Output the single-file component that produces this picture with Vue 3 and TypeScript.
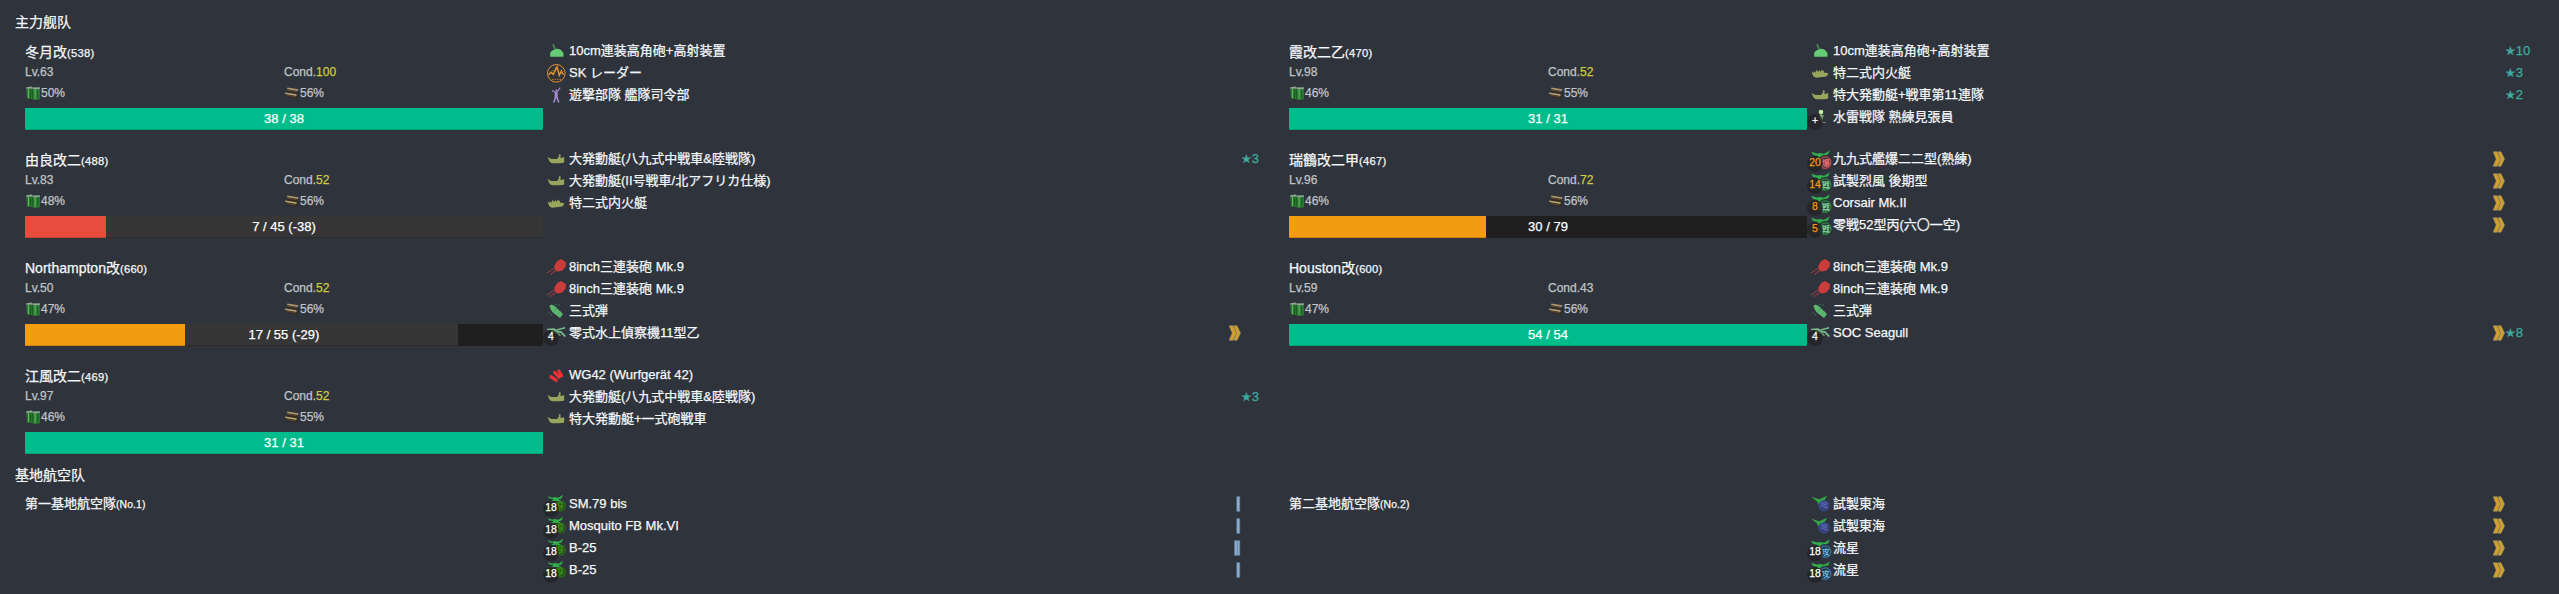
<script setup lang="ts">
type IconName =
  | 'aaGun' | 'radar' | 'command' | 'landing' | 'amphibious' | 'gun' | 'shell'
  | 'seaplane' | 'rocket' | 'lookout' | 'bomber' | 'fighter' | 'landPlane' | 'patrol' | 'attacker'

type Proficiency = 'ace' | 'one' | 'two'

interface Equip {
  icon: IconName
  name: string
  star?: number
  prof?: Proficiency
  slot?: string
  reduced?: boolean
}

interface Ship {
  name: string
  id: number
  lv: number
  cond: number
  fuel: number
  ammo: number
  hp: number
  max: number
  lost?: number
  equips: Equip[]
}

const ships: Ship[] = [
  {
    name: '冬月改', id: 538, lv: 63, cond: 100, fuel: 50, ammo: 56, hp: 38, max: 38,
    equips: [
      { icon: 'aaGun', name: '10cm連装高角砲+高射装置' },
      { icon: 'radar', name: 'SK レーダー' },
      { icon: 'command', name: '遊撃部隊 艦隊司令部' },
    ],
  },
  {
    name: '霞改二乙', id: 470, lv: 98, cond: 52, fuel: 46, ammo: 55, hp: 31, max: 31,
    equips: [
      { icon: 'aaGun', name: '10cm連装高角砲+高射装置', star: 10 },
      { icon: 'amphibious', name: '特二式内火艇', star: 3 },
      { icon: 'landing', name: '特大発動艇+戦車第11連隊', star: 2 },
      { icon: 'lookout', name: '水雷戦隊 熟練見張員', slot: '+' },
    ],
  },
  {
    name: '由良改二', id: 488, lv: 83, cond: 52, fuel: 48, ammo: 56, hp: 7, max: 45, lost: 38,
    equips: [
      { icon: 'landing', name: '大発動艇(八九式中戦車&陸戦隊)', star: 3 },
      { icon: 'landing', name: '大発動艇(II号戦車/北アフリカ仕様)' },
      { icon: 'amphibious', name: '特二式内火艇' },
    ],
  },
  {
    name: '瑞鶴改二甲', id: 467, lv: 96, cond: 72, fuel: 46, ammo: 56, hp: 30, max: 79,
    equips: [
      { icon: 'bomber', name: '九九式艦爆二二型(熟練)', slot: '20', reduced: true, prof: 'ace' },
      { icon: 'fighter', name: '試製烈風 後期型', slot: '14', reduced: true, prof: 'ace' },
      { icon: 'fighter', name: 'Corsair Mk.II', slot: '8', reduced: true, prof: 'ace' },
      { icon: 'fighter', name: '零戦52型丙(六〇一空)', slot: '5', reduced: true, prof: 'ace' },
    ],
  },
  {
    name: 'Northampton改', id: 660, lv: 50, cond: 52, fuel: 47, ammo: 56, hp: 17, max: 55, lost: 29,
    equips: [
      { icon: 'gun', name: '8inch三連装砲 Mk.9' },
      { icon: 'gun', name: '8inch三連装砲 Mk.9' },
      { icon: 'shell', name: '三式弾' },
      { icon: 'seaplane', name: '零式水上偵察機11型乙', slot: '4', prof: 'ace' },
    ],
  },
  {
    name: 'Houston改', id: 600, lv: 59, cond: 43, fuel: 47, ammo: 56, hp: 54, max: 54,
    equips: [
      { icon: 'gun', name: '8inch三連装砲 Mk.9' },
      { icon: 'gun', name: '8inch三連装砲 Mk.9' },
      { icon: 'shell', name: '三式弾' },
      { icon: 'seaplane', name: 'SOC Seagull', slot: '4', prof: 'ace', star: 8 },
    ],
  },
  {
    name: '江風改二', id: 469, lv: 97, cond: 52, fuel: 46, ammo: 55, hp: 31, max: 31,
    equips: [
      { icon: 'rocket', name: 'WG42 (Wurfgerät 42)' },
      { icon: 'landing', name: '大発動艇(八九式中戦車&陸戦隊)', star: 3 },
      { icon: 'landing', name: '特大発動艇+一式砲戦車' },
    ],
  },
]

const bases: { name: string; no: number; equips: Equip[] }[] = [
  {
    name: '第一基地航空隊', no: 1,
    equips: [
      { icon: 'landPlane', name: 'SM.79 bis', slot: '18', prof: 'one' },
      { icon: 'landPlane', name: 'Mosquito FB Mk.VI', slot: '18', prof: 'one' },
      { icon: 'landPlane', name: 'B-25', slot: '18', prof: 'two' },
      { icon: 'landPlane', name: 'B-25', slot: '18', prof: 'one' },
    ],
  },
  {
    name: '第二基地航空隊', no: 2,
    equips: [
      { icon: 'patrol', name: '試製東海', prof: 'ace' },
      { icon: 'patrol', name: '試製東海', prof: 'ace' },
      { icon: 'attacker', name: '流星', slot: '18', prof: 'ace' },
      { icon: 'attacker', name: '流星', slot: '18', prof: 'ace' },
    ],
  },
]

const planeMarks: Partial<Record<IconName, { color: string; text: string; fill: string }>> = {
  bomber: { color: '#c8494d', text: '爆', fill: '#f0696b' },
  fighter: { color: '#258a3e', text: '戦', fill: '#7bd397' },
  attacker: { color: '#3474a8', text: '攻', fill: '#5fb4ea' },
}

const units = [
  ...ships.map((s) => ({ key: s.name, group: 0, title: s.name, note: `(${s.id})`, ship: s as Ship | null, equips: s.equips })),
  ...bases.map((b) => ({ key: b.name, group: 1, title: b.name, note: `(No.${b.no})`, ship: null as Ship | null, equips: b.equips })),
]

const groups = [
  { title: '主力舰队', kind: 'fleet', units: units.filter((u) => u.group === 0) },
  { title: '基地航空队', kind: 'bases', units: units.filter((u) => u.group === 1) },
]

const level = (s: Ship) => (s.hp / s.max <= 0.25 ? 'danger' : s.hp / s.max <= 0.5 ? 'warning' : 'success')
const percent = (n: number, max: number) => `${(n / max) * 100}%`
const hpText = (s: Ship) => `${s.hp} / ${s.max}${s.lost ? ` (-${s.lost})` : ''}`
</script>

<template>
  <main class="report">
    <section v-for="g in groups" :key="g.title" :class="g.kind">
      <h2 class="title">{{ g.title }}</h2>
      <div class="grid">
        <article v-for="u in g.units" :key="u.key" class="unit">
          <div class="info">
            <div class="name">{{ u.title }}<small>{{ u.note }}</small></div>
            <template v-if="u.ship">
              <div class="stats lv">
                <span>Lv.{{ u.ship.lv }}</span>
                <span>Cond.<b :class="{ high: u.ship.cond > 49 }">{{ u.ship.cond }}</b></span>
              </div>
              <div class="stats supply">
                <span>
                  <svg class="res" viewBox="0 0 16 16">
                    <path d="M1.2 2.4H7.8V14L2 13.8z" fill="#2c7a2e" />
                    <path d="M7.6 3 14.8 2.4V14.2L9 15 7.6 14z" fill="#2a8430" />
                    <path d="M1.2 2.2 6.5 1.5 7.8 2.6 7.6 3.6 1.4 3.8zM7.8 2.6 14.8 2.2v1.8l-6.6.5z" fill="#93a396" />
                    <path d="M3.5 4v9M10.2 4.8v9" stroke="#6aa96b" stroke-width="1" />
                    <path d="M5.6 4v9.2M7.8 4v9.6M12.8 4.2v9.6" stroke="#15481c" stroke-width=".7" />
                  </svg>{{ u.ship.fuel }}%
                </span>
                <span>
                  <svg class="res" viewBox="0 0 16 16">
                    <path d="M3 2.2 15 4.4 14.4 8.4 14.6 10.4 13 13.9 2 11.2 .8 8.6 5 7z" fill="#332b22" />
                    <path d="M3.2 3.4 14.3 5.1" stroke="#a99970" stroke-width="1.6" />
                    <path d="M1.2 8.2 12.6 10.1" stroke="#b5a376" stroke-width="1.6" />
                    <path d="M4 5.2 13.5 7M3 10.2 12 12" stroke="#574733" stroke-width="1.2" />
                  </svg>{{ u.ship.ammo }}%
                </span>
              </div>
              <div class="bar">
                <i class="fill" :class="level(u.ship)" :style="{ width: percent(u.ship.hp, u.ship.max) }"></i>
                <i v-if="u.ship.lost" class="fill lost" :style="{ width: percent(u.ship.lost, u.ship.max) }"></i>
                <span class="hp">{{ hpText(u.ship) }}</span>
              </div>
            </template>
          </div>

          <ul class="equips">
            <li v-for="(e, i) in u.equips" :key="i">
              <span class="icon">
                <svg viewBox="0 0 20 20">
                  <g v-if="e.icon === 'aaGun'">
                    <path d="M7 3.2 9.5 8.5" stroke="#4f9a62" stroke-width="1.4" />
                    <path d="M4.2 15.8V12Q6.5 8 11.5 7.7 16 8.4 17.5 12.5V15.8z" fill="#66cc77" />
                  </g>
                  <g v-else-if="e.icon === 'radar'" fill="none" stroke="#e2922c">
                    <circle cx="10.3" cy="10.3" r="8.8" stroke-width="1" />
                    <path d="M2.5 11.8 5.2 9.3 7.2 11.5 11 3.8 13.3 12.3 15.4 8 16.5 10.5 18 11.5" stroke-width="1.5" />
                    <path d="M6 16.4H15M9.5 4.5V7M6.5 7.5 8.5 8" stroke-width=".8" stroke-dasharray="1.5 1" />
                  </g>
                  <g v-else-if="e.icon === 'command'" stroke="#a78bd0" fill="none">
                    <path d="M6 5.6 10.3 8 14.2 2.6" stroke-width="1.2" />
                    <circle cx="10.2" cy="5.4" r="1" fill="#a78bd0" stroke="none" />
                    <path d="M10.2 7.5V12.5" stroke-width="3" />
                    <path d="M9.6 12 7.8 17.6M10.8 12 12.8 17.6" stroke-width="1.6" />
                  </g>
                  <path v-else-if="e.icon === 'landing'" fill="#9aa55c"
                    d="M1.3 8 5.5 9.9H11.6V8.4L12.9 8.2V5.2H14.5V8.9L18.2 8.3V13.3Q17 14.2 12 14.2H6Q3.4 13.8 3 11.2z" />
                  <path v-else-if="e.icon === 'amphibious'" fill="#9aa55c"
                    d="M1.5 8 3.3 10 4.2 8.3 5.5 9.8 6.6 6.8 8 9 9.3 7 10.3 9 12 6.2 12.8 8.3 14 7.5V9.4L18.3 10.2Q17.8 13 15 13.8L6 14.8Q3 14 2.5 11.8z" />
                  <g v-else-if="e.icon === 'gun'">
                    <path d="M0.8 16.2 10 10M3.8 17.8 12 12" stroke="#a83c40" stroke-width="1" />
                    <path d="M8.4 8.6 11.2 4 15 2 20 5.2 19.6 9.5 16 13.8 11.5 14.6 8.8 12.2z" fill="#cb3d3d" />
                  </g>
                  <g v-else-if="e.icon === 'shell'">
                    <path d="M3.5 4.2Q7 3 10 6.2L17 13 14 17 6.6 11.3Q3.6 8 3.5 4.2z" fill="#5cb870" />
                    <path d="M8.5 9.8 11.6 6.6M12 12.8 14.7 9.8" stroke="#479a5c" stroke-width="1" />
                    <path d="M9.5 3.7h1.3M12.5 4.2h1.2M3 11.5v1.2M5 13.6h1.2" stroke="#3d7d55" stroke-width="1.3" />
                  </g>
                  <g v-else-if="e.icon === 'seaplane'" stroke="#78b98b" fill="none">
                    <path d="M1 6.5 7 6 10 7.2 19 4.8" stroke-width="1.7" />
                    <path d="M5 8 15 9.2 19.3 13.6" stroke-width="1.8" />
                    <path d="M10 9.5 14.5 12.5M8 5.5 9 9" stroke-width="1.1" />
                  </g>
                  <g v-else-if="e.icon === 'rocket'" stroke="#f03236" stroke-linecap="round">
                    <path d="M12.8 6 15.6 10.6" stroke-width="3.2" />
                    <path d="M8.6 7.4 13.2 12.2" stroke-width="3.2" />
                    <path d="M5 11.8 10 15.2" stroke-width="3.4" />
                  </g>
                  <g v-else-if="e.icon === 'lookout'" fill="none" stroke="#8fb385">
                    <circle cx="11" cy="5" r="2.3" fill="#c2ec9c" stroke="none" />
                    <path d="M10.8 7.5 11.8 12.5" stroke-width="2.6" />
                    <path d="M12.3 8 14 9.5M11.5 12 12.4 15.5H15.8" stroke-width="1.1" stroke="#71906c" />
                  </g>
                  <g v-else-if="e.icon === 'landPlane'">
                    <g fill="none">
                      <circle cx="14.2" cy="12" r="5" fill="#274420" stroke="#2c7218" stroke-width="1.2" />
                      <path d="M12.5 8.8h3.6v5l-3.6 1.4zM11.5 12h5.6" stroke="#3b9415" stroke-width="1.3" />
                    </g>
                    <path d="M2 2.2 6.5 3.8 8.7 3 12.5 3.8 17 .8 15.7 4.2 12.3 5.4 16.2 7.4 9.5 6.8 4.5 7.6 7.8 5.2 3 4.2z" fill="#32b04a" />
                  </g>
                  <g v-else-if="e.icon === 'patrol'">
                    <path d="M1.3 2.7 9.3 5.2 17.2 1.8 14 7 9 11.3 6.5 7z" fill="#32a744" />
                    <circle cx="14" cy="11.8" r="5" fill="#303a68" stroke="#3b4b96" stroke-width="1.2" />
                    <text x="14" y="14.4" class="mark" fill="#5765b5">哨</text>
                  </g>
                  <g v-else>
                    <circle cx="15.2" cy="13.6" r="5.7" fill="#2b3a40" :stroke="planeMarks[e.icon]?.color" stroke-width="1.2" />
                    <path d="M1.2 2.8 7 4.5 10 4 14 4.7 19.8 1.5 18 5.6 12 6.4 9 9 7 6.8 3 6z" fill="#2fae4a" />
                    <text x="15.4" y="16.8" class="mark big" :fill="planeMarks[e.icon]?.fill">{{ planeMarks[e.icon]?.text }}</text>
                  </g>
                </svg>
                <span v-if="e.slot" class="slot" :class="{ reduced: e.reduced }">{{ e.slot }}</span>
              </span>
              <span class="label">{{ e.name }}</span>
              <svg v-if="e.prof" class="prof" viewBox="0 0 14 16">
                <g v-if="e.prof === 'ace'" fill="#d0a02d" stroke="#a39367" stroke-width=".6">
                  <path d="M2.2 .8H6L9.4 8 6 15.2H2.2L5.2 8z" />
                  <path d="M6.8 .8H10L13.5 8 10 15.2H6.8L9.8 8z" />
                </g>
                <g v-else fill="#8eadd0" stroke="#58789b" stroke-width=".7">
                  <rect x="9.8" y=".7" width="3" height="14.6" />
                  <rect v-if="e.prof === 'two'" x="7.5" y=".7" width="2.7" height="14.6" />
                </g>
              </svg>
              <span class="star"><template v-if="e.star"><i>★</i>{{ e.star }}</template></span>
            </li>
          </ul>
        </article>
      </div>
    </section>
  </main>
</template>

<style>
html,
body {
  margin: 0;
  background: #2f343c;
}
</style>

<style scoped>
.report {
  box-sizing: border-box;
  width: 100%;
  height: 594px;
  padding: 5px 6px 0 15px;
  overflow: hidden;
  background: #2f343c;
  color: #f5f8fa;
  font: 13px/22px "Liberation Sans", "Noto Sans CJK SC", sans-serif;
  -webkit-text-stroke: 0.25px currentColor;
}
.title {
  height: 35px;
  margin: 0;
  font-size: 14px;
  font-weight: 400;
  line-height: 34px;
}
.grid {
  display: grid;
  grid-template-columns: repeat(2, 1264px);
  grid-auto-rows: 108px;
  padding-left: 10px;
}
.fleet .grid {
  height: 418px;
}
.unit {
  display: flex;
}
.info {
  width: 518px;
}
.name {
  height: 24px;
  font-size: 14px;
  line-height: 24px;
}
.name small {
  font-size: 11.2px;
  letter-spacing: 0.25px;
}
.bases .name {
  font-size: 13px;
  line-height: 22px;
}
.bases .name small {
  font-size: 10.4px;
  letter-spacing: 0.1px;
}
.stats {
  display: grid;
  grid-template-columns: 1fr 1fr;
  color: #c0c3c7;
  font-size: 12px;
}
.stats span {
  display: flex;
  align-items: center;
}
.stats b {
  font-weight: 400;
}
.stats .high {
  color: #cccc3d;
}
.lv {
  height: 17px;
}
.lv span {
  height: 16px;
}
.supply {
  height: 24px;
  margin-bottom: 3px;
}
.res {
  width: 16px;
  height: 16px;
}
.bar {
  position: relative;
  display: flex;
  height: 22px;
  background: #1f1f1f;
}
.fill {
  height: 22px;
  box-shadow: inset 0 -1px 0 rgba(0, 0, 0, 0.15);
}
.success {
  background: #00bc8c;
}
.warning {
  background: #f39c12;
}
.danger {
  background: #e74c3c;
}
.lost {
  background: #363636;
}
.hp {
  position: absolute;
  inset: 0;
  color: #fff;
  line-height: 21px;
  text-align: center;
}
.equips {
  box-sizing: border-box;
  width: 731px;
  margin: 0;
  padding: 0 0 0 3px;
  list-style: none;
}
.equips li {
  display: flex;
  align-items: center;
  height: 22px;
}
.icon {
  position: relative;
  width: 20px;
  height: 20px;
  margin-right: 3px;
}
.icon svg {
  display: block;
  width: 20px;
  height: 20px;
  overflow: visible;
  -webkit-text-stroke: 0;
}
.mark {
  font: 700 7px "Noto Sans CJK JP", sans-serif;
  text-anchor: middle;
}
.mark.big {
  font-size: 8.5px;
}
.slot {
  position: absolute;
  top: 7px;
  left: -3px;
  width: 16px;
  height: 16px;
  border-radius: 8px;
  background: rgba(33, 33, 33, 0.7);
  color: #fff;
  font-size: 10.4px;
  line-height: 13px;
  text-align: center;
}
.slot.reduced {
  color: #f39c12;
}
.label {
  flex: 1;
  white-space: nowrap;
}
.prof {
  width: 14px;
  height: 16px;
}
.star {
  width: 33px;
  color: #3fa9a0;
}
.star i {
  font: 12px "DejaVu Sans", sans-serif;
}
</style>
